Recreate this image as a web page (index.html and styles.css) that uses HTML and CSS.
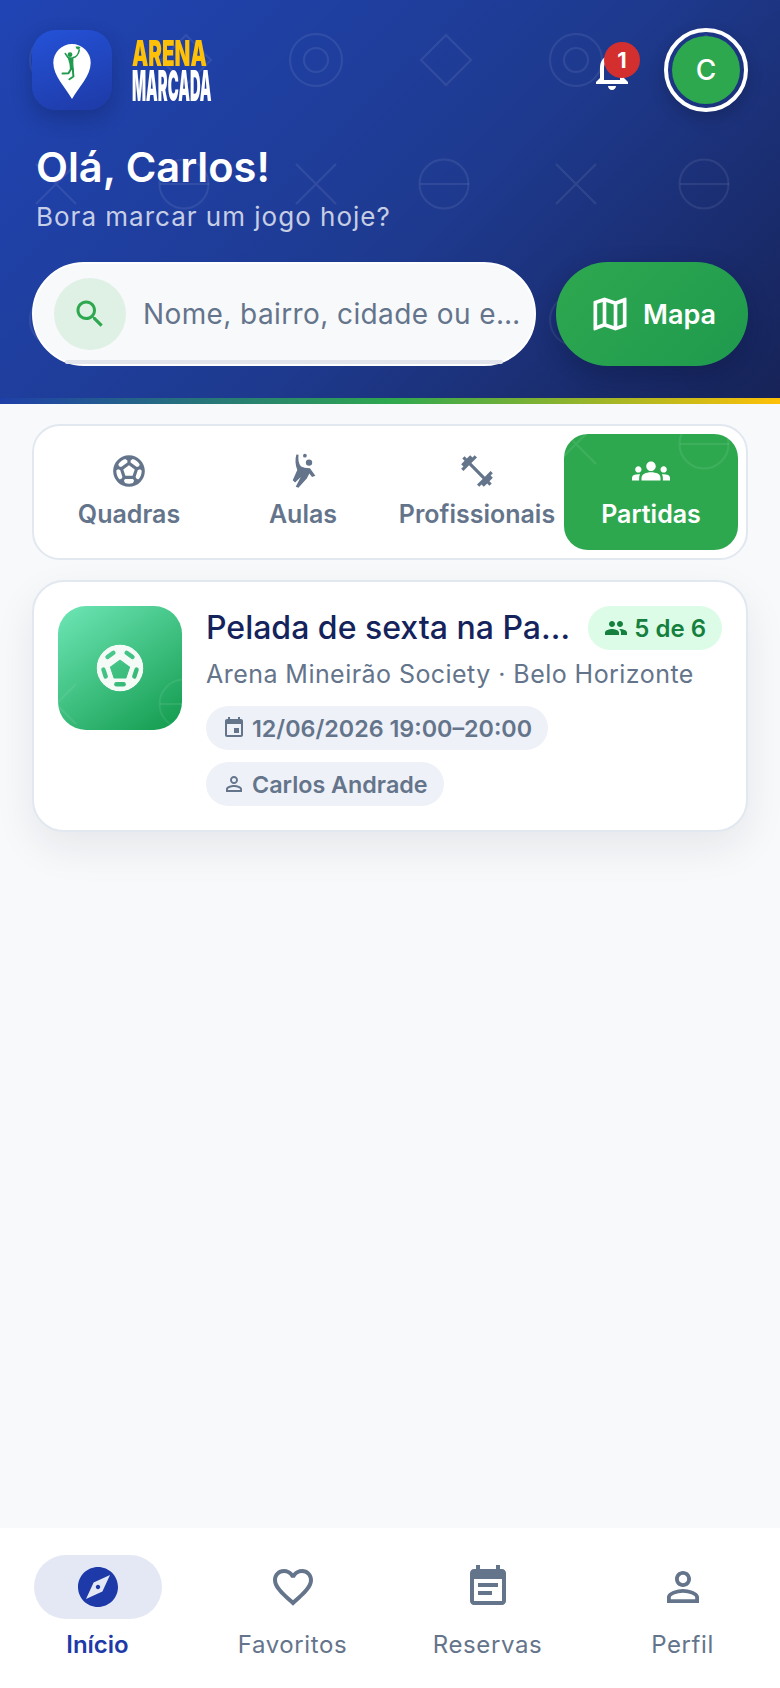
FILE: index.html
```html
<!DOCTYPE html>
<html lang="pt-BR">
<head>
    <meta charset="UTF-8">
    <meta name="viewport" content="width=device-width, initial-scale=1.0">
    <title>Arena Marcada</title>
    <link rel="stylesheet" href="styles.css">
</head>
<body>
<div class="app">
    <header class="header">
        <div class="topRow">
            <div class="logoBox">
                <svg class="pin" viewBox="0 0 80 80">
                    <path fill="#fff" d="M40 14a18.700 18.700 0 0 1 18.700 18.700c0 13-11.700 24-18.700 36.300c-7-12.300-18.700-23.300-18.700-36.300a18.700 18.700 0 0 1 18.700-18.700z"/>
                    <g fill="none" stroke="#1f9a4e" stroke-linecap="round" stroke-linejoin="round">
                        <path stroke-width="1.500" d="M36 27.500l-2.800-4M41 27.500c3 0 5.500-3.500 6.300-7.500"/>
                        <path stroke-width="2" d="M39 39l-2.500 4.300-6 .2M40.800 39l.6 7.500-4 2.800"/>
                    </g>
                    <path fill="#1f9a4e" d="M35.500 27l6 .5-.2 5.500.5 7h-3.800l-.5-6z"/>
                    <circle cx="38" cy="24.700" r="2.400" fill="#1f9a4e"/>
                    <path fill="#1f9a4e" d="M43.500 16.500h3.500l1.500 1-2 2.300-2-1z"/>
                </svg>
            </div>
            <div class="brand">
                <span class="brandTop">ARENA</span>
                <span class="brandBottom">MARCADA</span>
            </div>
            <div class="spacer"></div>
            <div class="bell">
                <svg class="icon48" viewBox="0 0 24 24"><path fill="#fff" d="M12 22c1.100 0 2-.9 2-2h-4c0 1.100.9 2 2 2zm6-6v-5c0-3.070-1.630-5.640-4.500-6.320V4c0-.83-.67-1.500-1.500-1.500s-1.500.67-1.500 1.500v.68C7.640 5.360 6 7.920 6 11v5l-2 2v1h16v-1l-2-2zm-2 1H8v-6c0-2.480 1.510-4.500 4-4.500s4 2.020 4 4.500v6z"/></svg>
                <span class="bellBadge">1</span>
            </div>
            <div class="avatar"><span class="avatarInner">C</span></div>
        </div>
        <h1 class="hello">Olá, Carlos!</h1>
        <p class="helloSub">Bora marcar um jogo hoje?</p>
        <div class="searchRow">
            <div class="search">
                <span class="searchIcon">
                    <svg class="icon36" viewBox="0 0 24 24"><path fill="#2ea84f" d="M15.500 14h-.79l-.28-.27C15.410 12.590 16 11.110 16 9.500 16 5.910 13.090 3 9.500 3S3 5.910 3 9.500 5.910 16 9.500 16c1.610 0 3.090-.59 4.230-1.570l.27.28v.79l5 4.990L20.490 19l-4.990-5zm-6 0C7.010 14 5 11.990 5 9.500S7.010 5 9.500 5 14 7.010 14 9.500 11.990 14 9.500 14z"/></svg>
                </span>
                <span class="placeholder">Nome, bairro, cidade ou esporte</span>
            </div>
            <div class="mapBtn">
                <svg class="icon44" viewBox="0 0 24 24"><path fill="#fff" d="M20.500 3l-.16.03L15 5.100 9 3 3.360 4.900c-.21.07-.36.25-.36.48V20.500c0 .28.22.5.5.5l.16-.03L9 18.900l6 2.100 5.640-1.900c.21-.07.36-.25.36-.48V3.500c0-.28-.22-.5-.5-.5zM10 5.470l4 1.400v11.660l-4-1.400V5.470zm-5 .99l3-1.010v11.700l-3 1.160V6.460zm14 11.080l-3 1.010V6.860l3-1.160v11.840z"/></svg>
                <span>Mapa</span>
            </div>
        </div>
    </header>
    <div class="stripe"></div>

    <main class="content">
        <nav class="tabs">
            <div class="tab">
                <svg class="icon38" viewBox="0 0 24 24"><path d="M12 2C6.480 2 2 6.480 2 12s4.480 10 10 10 10-4.480 10-10S17.520 2 12 2zm1 3.300l1.350-.95c1.820.56 3.370 1.760 4.380 3.340l-.39 1.340-1.350.46L13 6.700V5.300zm-3.350-.95L11 5.300v1.400L7.010 9.490l-1.350-.46-.39-1.340c1.010-1.570 2.560-2.770 4.380-3.340zM7.080 17.110l-1.140.1C4.730 15.810 4 13.990 4 12c0-.12.01-.23.02-.35l1-.73 1.380.48 1.460 4.340-.78 1.370zm7.420 2.480c-.79.26-1.630.41-2.500.41s-1.710-.15-2.500-.41l-.69-1.490.64-1.100h5.110l.64 1.110-.7 1.480zM14.270 15H9.730l-1.350-4.020L12 8.440l3.630 2.540L14.270 15zm3.790 2.210l-1.140-.1-.79-1.370 1.460-4.340 1.390-.47 1 .73c.01.11.02.22.02.34 0 1.990-.73 3.810-1.940 5.210z"/></svg>
                <span>Quadras</span>
            </div>
            <div class="tab">
                <svg class="icon38" viewBox="0 0 24 24"><circle cx="13.200" cy="2.300" r="1.200"/><circle cx="15.800" cy="6.700" r="2"/><path d="M7.800 1.600l1.400.1C8.800 4.500 9.200 7.500 10.800 9.200L13 9.900l3.400.3 3.400 4.800-2.100.8-1.700-2.300-1.600 3.300-5.300 5.800-1.700-.7 3.200-6.100L7 19.300l-1.500-1.500 2.900-6.400C7 8 7 4.500 7.800 1.600z"/></svg>
                <span>Aulas</span>
            </div>
            <div class="tab">
                <svg class="icon38" viewBox="0 0 24 24"><path d="M20.570 14.860L22 13.430 20.570 12 17 15.570 8.430 7 12 3.430 10.570 2 9.140 3.430 7.710 2 5.570 4.140 4.140 2.710 2.710 4.140l1.430 1.430L2 7.710l1.430 1.430L2 10.570 3.430 12 7 8.430 15.570 17 12 20.570 13.430 22l1.430-1.430L16.290 22l2.140-2.140 1.430 1.430 1.430-1.430-1.430-1.430L22 16.290z"/></svg>
                <span>Profissionais</span>
            </div>
            <div class="tab active">
                <svg class="icon38" viewBox="0 0 24 24"><path d="M12 12.750c1.630 0 3.070.39 4.240.9 1.080.48 1.760 1.560 1.760 2.730V18H6v-1.610c0-1.180.68-2.260 1.760-2.730 1.170-.52 2.610-.91 4.240-.91zM4 13c1.100 0 2-.9 2-2s-.9-2-2-2-2 .9-2 2 .9 2 2 2zm1.130 1.100c-.37-.06-.74-.1-1.130-.1-.99 0-1.930.21-2.780.58C.48 14.900 0 15.620 0 16.430V18h4.500v-1.610c0-.83.23-1.610.63-2.290zM20 13c1.100 0 2-.9 2-2s-.9-2-2-2-2 .9-2 2 .9 2 2 2zm4 3.430c0-.81-.48-1.530-1.220-1.850-.85-.37-1.790-.58-2.780-.58-.39 0-.76.04-1.130.1.4.68.63 1.460.63 2.290V18H24v-1.570zM12 6c1.660 0 3 1.340 3 3s-1.340 3-3 3-3-1.340-3-3 1.340-3 3-3z"/></svg>
                <span>Partidas</span>
            </div>
        </nav>

        <article class="card">
            <div class="thumb">
                <svg class="ball" viewBox="-24 -24 48 48">
                    <mask id="ballHoles">
                        <circle r="22.500" fill="#fff"/>
                        <path fill="#000" stroke="#000" stroke-width="1" stroke-linejoin="round" d="M0-7.500l9.200 6.700-3.500 10.300h-11.400l-3.500-10.300z"/>
                        <g stroke="#000" stroke-width="4.200" stroke-linecap="round">
                            <path d="M-3.500 15.600h7"/>
                            <path transform="rotate(72)" d="M-3.500 15.600h7"/>
                            <path transform="rotate(144)" d="M-3.500 15.600h7"/>
                            <path transform="rotate(216)" d="M-3.500 15.600h7"/>
                            <path transform="rotate(288)" d="M-3.500 15.600h7"/>
                        </g>
                    </mask>
                    <circle r="22.500" fill="#f4fbf7" mask="url(#ballHoles)"/>
                </svg>
            </div>
            <div class="cardBody">
                <div class="cardTop">
                    <h2 class="cardTitle">Pelada de sexta na Pampulha</h2>
                    <span class="slots">
                        <svg class="icon24" viewBox="0 0 24 24"><path d="M16 11c1.660 0 2.990-1.340 2.990-3S17.660 5 16 5c-1.660 0-3 1.340-3 3s1.340 3 3 3zm-8 0c1.660 0 2.990-1.340 2.990-3S9.660 5 8 5C6.340 5 5 6.340 5 8s1.340 3 3 3zm0 2c-2.330 0-7 1.170-7 3.500V19h14v-2.500c0-2.330-4.670-3.500-7-3.500zm8 0c-.29 0-.62.02-.97.05 1.160.84 1.970 1.970 1.970 3.450V19h6v-2.500c0-2.330-4.670-3.500-7-3.500z"/></svg>
                        5 de 6
                    </span>
                </div>
                <p class="cardSub">Arena Mineirão Society · Belo Horizonte</p>
                <div class="chips">
                    <span class="chip">
                        <svg class="icon24" viewBox="0 0 24 24"><path d="M17 12h-5v5h5v-5zM16 1v2H8V1H6v2H5c-1.110 0-1.990.9-1.990 2L3 19c0 1.100.89 2 2 2h14c1.100 0 2-.9 2-2V5c0-1.100-.9-2-2-2h-1V1h-2zm3 18H5V8h14v11z"/></svg>
                        12/06/2026 19:00–20:00
                    </span>
                    <span class="chip">
                        <svg class="icon24" viewBox="0 0 24 24"><path d="M12 5.900c1.160 0 2.100.94 2.100 2.100s-.94 2.100-2.100 2.100S9.900 9.160 9.900 8s.94-2.100 2.100-2.100m0 9c2.970 0 6.100 1.460 6.100 2.100v1.100H5.900V17c0-.64 3.130-2.100 6.100-2.100M12 4C9.790 4 8 5.790 8 8s1.790 4 4 4 4-1.790 4-4-1.790-4-4-4zm0 9c-2.670 0-8 1.340-8 4v3h16v-3c0-2.660-5.330-4-8-4z"/></svg>
                        Carlos Andrade
                    </span>
                </div>
            </div>
        </article>
    </main>

    <footer class="bottomNav">
        <div class="navItem current">
            <span class="navPill">
                <svg class="icon48" viewBox="0 0 24 24"><path d="M12 10.900c-.61 0-1.100.49-1.100 1.100s.49 1.100 1.100 1.100c.61 0 1.100-.49 1.100-1.100s-.49-1.100-1.100-1.100zM12 2C6.480 2 2 6.480 2 12s4.480 10 10 10 10-4.480 10-10S17.520 2 12 2zm2.190 12.190L6 18l3.810-8.190L18 6l-3.810 8.190z"/></svg>
            </span>
            <span class="navLabel">Início</span>
        </div>
        <div class="navItem">
            <span class="navPill">
                <svg class="icon48" viewBox="0 0 24 24"><path d="M16.500 3c-1.740 0-3.410.81-4.500 2.090C10.910 3.810 9.240 3 7.500 3 4.420 3 2 5.420 2 8.500c0 3.780 3.400 6.860 8.550 11.540L12 21.350l1.450-1.320C18.600 15.360 22 12.280 22 8.500 22 5.420 19.580 3 16.500 3zm-4.400 15.550l-.1.1-.1-.1C7.140 14.240 4 11.390 4 8.500 4 6.500 5.500 5 7.500 5c1.540 0 3.040.99 3.570 2.360h1.870C13.460 5.990 14.960 5 16.500 5c2 0 3.500 1.500 3.500 3.500 0 2.890-3.140 5.740-7.900 10.050z"/></svg>
            </span>
            <span class="navLabel">Favoritos</span>
        </div>
        <div class="navItem">
            <span class="navPill">
                <svg class="icon48" viewBox="0 0 24 24"><path d="M17 10H7v2h10v-2zm2-7h-1V1h-2v2H8V1H6v2H5c-1.110 0-1.990.9-1.990 2L3 19c0 1.100.89 2 2 2h14c1.100 0 2-.9 2-2V5c0-1.100-.9-2-2-2zm0 16H5V8h14v11zm-5-5H7v2h7v-2z"/></svg>
            </span>
            <span class="navLabel">Reservas</span>
        </div>
        <div class="navItem">
            <span class="navPill">
                <svg class="icon48" viewBox="0 0 24 24"><path d="M12 5.900c1.160 0 2.100.94 2.100 2.100s-.94 2.100-2.100 2.100S9.900 9.160 9.900 8s.94-2.100 2.100-2.100m0 9c2.970 0 6.100 1.460 6.100 2.100v1.100H5.900V17c0-.64 3.130-2.100 6.100-2.100M12 4C9.790 4 8 5.790 8 8s1.790 4 4 4 4-1.790 4-4-1.790-4-4-4zm0 9c-2.670 0-8 1.340-8 4v3h16v-3c0-2.660-5.330-4-8-4z"/></svg>
            </span>
            <span class="navLabel">Perfil</span>
        </div>
    </footer>
</div>
</body>
</html>
```
FILE: styles.css
```css
:root{
    --pattern: url("data:image/svg+xml,%3Csvg xmlns='http://www.w3.org/2000/svg' width='260' height='260' fill='none' stroke='%23fff' stroke-opacity='.08' stroke-width='2'%3E%3Ccircle cx='56' cy='60' r='26'/%3E%3Ccircle cx='56' cy='60' r='12'/%3E%3Cpath d='M186 35l25 25-25 25-25-25z'/%3E%3Cpath d='M36 164l40 40M76 164l-40 40'/%3E%3Ccircle cx='184' cy='184' r='24.500'/%3E%3Cpath d='M160 184h49'/%3E%3C/svg%3E");
}
html,body{
    margin: 0;
    padding: 0;
    background: #f8f9fb;
    font-family: Inter,"Liberation Sans",sans-serif;
}
.app{
    width: 780px;
    height: 1688px;
    display: flex;
    flex-direction: column;
    overflow: hidden;
}
svg{
    display: block;
    flex: none;
    fill: currentColor;
}
.icon24{ width: 24px; height: 24px; }
.icon36{ width: 36px; height: 36px; }
.icon38{ width: 38px; height: 38px; }
.icon44{ width: 44px; height: 44px; }
.icon48{ width: 48px; height: 48px; }

/* header */
.header{
    padding: 28px 32px 32px;
    background: var(--pattern) fixed, linear-gradient(135deg,#2044b4 0%,#1e3a8f 55%,#172358 100%);
}
.topRow{
    display: flex;
    align-items: center;
    height: 84px;
}
.logoBox{
    width: 80px;
    height: 80px;
    border-radius: 24px;
    background: linear-gradient(160deg,#2452d8,#1e3aa6);
    box-shadow: 0 8px 20px rgba(10,20,70,.3);
}
.pin{
    width: 80px;
    height: 80px;
}
.brand{
    display: flex;
    flex-direction: column;
    gap: 2px;
    margin-left: 20px;
    width: 80px;
    font-weight: 900;
}
.brandTop{
    color: #ffc107;
    font-size: 36px;
    height: 28px;
    line-height: 28px;
    transform: scaleX(.57);
    transform-origin: left center;
}
.brandBottom{
    color: #fff;
    font-size: 43px;
    height: 32px;
    line-height: 32px;
    white-space: nowrap;
    transform: scaleX(.343);
    transform-origin: left center;
}
.spacer{
    flex: 1;
}
.bell{
    position: relative;
    width: 48px;
    height: 48px;
    margin-right: 28px;
}
.bellBadge{
    position: absolute;
    top: -4px;
    right: -4px;
    width: 36px;
    height: 36px;
    border-radius: 50%;
    background: #d32f2f;
    color: #fff;
    font-size: 22px;
    font-weight: 700;
    line-height: 36px;
    text-align: center;
}
.avatar{
    width: 84px;
    height: 84px;
    box-sizing: border-box;
    padding: 4px;
    border: 4px solid #fff;
    border-radius: 50%;
    box-shadow: 0 6px 16px rgba(0,0,0,.2);
}
.avatarInner{
    display: block;
    height: 68px;
    border-radius: 50%;
    background: #2ea84f;
    color: #fff;
    font-size: 28px;
    font-weight: 500;
    line-height: 68px;
    text-align: center;
}
.hello{
    margin: 29px 0 0 4px;
    color: #fff;
    font-size: 41.6px;
    font-weight: 600;
    line-height: 52px;
}
.helloSub{
    margin: 4px 0 0 4px;
    color: rgba(255,255,255,.75);
    font-size: 26px;
    letter-spacing: 1px;
    line-height: 40px;
}
.searchRow{
    display: flex;
    gap: 20px;
    margin-top: 25px;
}
.search{
    position: relative;
    flex: 1;
    min-width: 0;
    height: 104px;
    box-sizing: border-box;
    display: flex;
    align-items: center;
    gap: 17px;
    padding: 0 2px 0 20px;
    border: 2px solid #fff;
    border-radius: 52px;
    background: #f8f9fb;
}
.search::after{
    content: "";
    position: absolute;
    left: 31px;
    right: 31px;
    bottom: 0;
    height: 4px;
    border-radius: 2px;
    background: #e2e4ec;
}
.searchIcon{
    flex: none;
    width: 72px;
    height: 72px;
    display: flex;
    align-items: center;
    justify-content: center;
    border-radius: 50%;
    background: #dff0e5;
}
.placeholder{
    flex: 1;
    min-width: 0;
    margin-right: 6px;
    overflow: hidden;
    white-space: nowrap;
    text-overflow: ellipsis;
    color: #64748b;
    font-size: 28px;
    letter-spacing: .4px;
    line-height: 40px;
}
.mapBtn{
    width: 192px;
    height: 104px;
    display: flex;
    align-items: center;
    justify-content: center;
    gap: 11px;
    border-radius: 52px;
    background: linear-gradient(135deg,#2ea84f,#1f9a4e);
    box-shadow: 0 10px 24px rgba(5,15,50,.3);
    color: #fff;
    font-size: 27px;
    font-weight: 600;
}
.stripe{
    height: 6px;
    background: linear-gradient(90deg,#1f3fa8,#2ea84f 50%,#ffc107);
}

/* content */
.content{
    flex: 1;
    padding: 20px 32px;
}
.tabs{
    display: flex;
    padding: 8px;
    border: 2px solid #e2e8f0;
    border-radius: 28px;
    background: #fff;
}
.tab{
    flex: 1;
    height: 116px;
    box-sizing: border-box;
    display: flex;
    flex-direction: column;
    align-items: center;
    padding-top: 18px;
    gap: 6px;
    border-radius: 24px;
    color: #64748b;
    font-size: 25px;
    font-weight: 600;
    line-height: 36px;
    white-space: nowrap;
}
.tab.active{
    background: var(--pattern) fixed, #2ea84f;
    color: #fff;
}
.card{
    display: flex;
    gap: 24px;
    margin-top: 20px;
    padding: 24px;
    border: 2px solid #e2e8f0;
    border-radius: 32px;
    background: #fff;
    box-shadow: 0 16px 40px rgba(15,23,42,.08);
}
.thumb{
    flex: none;
    width: 124px;
    height: 124px;
    display: flex;
    align-items: center;
    justify-content: center;
    border-radius: 28px;
    background: var(--pattern) fixed, linear-gradient(145deg,#6ee7b7,#119a4c);
}
.ball{
    width: 50px;
    height: 50px;
}
.cardBody{
    flex: 1;
    min-width: 0;
}
.cardTop{
    display: flex;
    align-items: center;
    gap: 14px;
}
.cardTitle{
    flex: 1;
    min-width: 0;
    margin: 0;
    overflow: hidden;
    white-space: nowrap;
    text-overflow: ellipsis;
    color: #14235c;
    font-size: 32px;
    font-weight: 500;
    line-height: 44px;
}
.slots{
    flex: none;
    height: 44px;
    display: flex;
    align-items: center;
    gap: 6px;
    padding: 0 16px;
    border-radius: 22px;
    background: #dcfce7;
    color: #15803d;
    font-size: 24px;
    font-weight: 600;
    white-space: nowrap;
}
.cardSub{
    margin: 6px 0 14px;
    color: #64748b;
    font-size: 25px;
    letter-spacing: .45px;
    line-height: 36px;
}
.chips{
    display: flex;
    flex-wrap: wrap;
    gap: 12px;
}
.chip{
    height: 44px;
    display: flex;
    align-items: center;
    gap: 6px;
    padding: 0 16px;
    border-radius: 22px;
    background: #eef1f7;
    color: #64748b;
    font-size: 23.3px;
    font-weight: 600;
}

/* bottom nav */
.bottomNav{
    height: 160px;
    box-sizing: border-box;
    display: flex;
    padding-top: 27px;
    background: #fff;
}
.navItem{
    flex: 1;
    display: flex;
    flex-direction: column;
    align-items: center;
    color: #64748b;
}
.navPill{
    width: 128px;
    height: 64px;
    display: flex;
    align-items: center;
    justify-content: center;
    border-radius: 32px;
}
.navLabel{
    margin-top: 8px;
    font-size: 24px;
    letter-spacing: .6px;
    line-height: 36px;
}
.current{
    color: #1e3aa8;
}
.current .navPill{
    background: #e4e8f5;
}
.current .navLabel{
    font-weight: 600;
    letter-spacing: 0;
}
```
